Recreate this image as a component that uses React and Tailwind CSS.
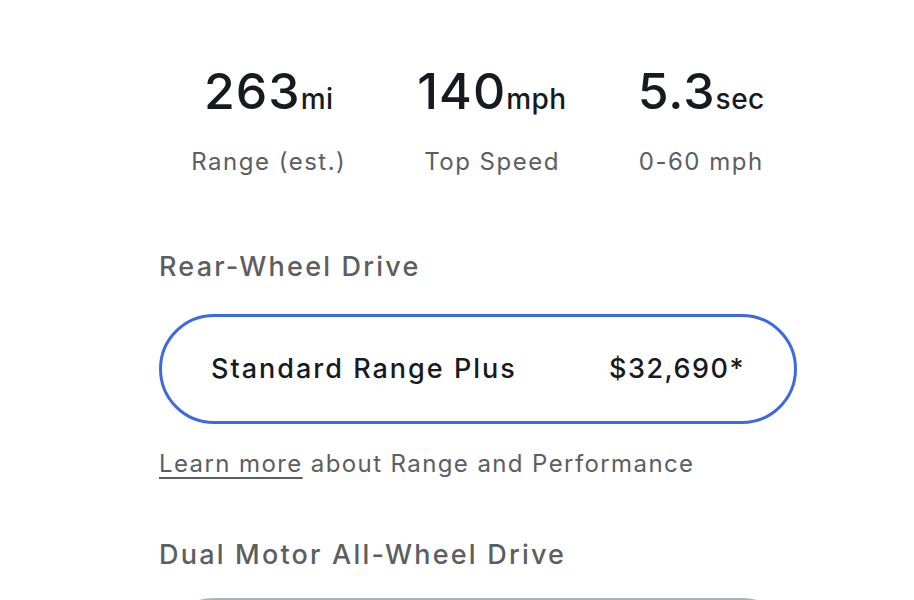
export default function App() {
  return (
    <div className="w-[914px] h-[600px] overflow-hidden bg-white font-['Inter',sans-serif]">
      <div className="ml-[159px] w-[638px] pt-[66px]">
        <div className="flex justify-center gap-[71px]">
          {[
            ["263", "mi", "Range (est.)"],
            ["140", "mph", "Top Speed"],
            ["5.3", "sec", "0-60 mph"],
          ].map(([v, u, l]) => (
            <div key={l} className="flex flex-col items-center">
              <div className="flex items-baseline text-[#171a20] h-[50px]">
                <span className="text-[50px] leading-[50px] font-medium tracking-[1px]">{v}</span>
                <span className="text-[28px] leading-[50px] font-medium tracking-[0.5px]">{u}</span>
              </div>
              <div className="mt-[31px] text-[24px] leading-[30px] tracking-[1.5px] text-[#5c5e62]">{l}</div>
            </div>
          ))}
        </div>
        <div className="mt-[74px] text-[27px] leading-[32px] font-medium tracking-[2.2px] text-[#5c5e62]">Rear-Wheel Drive</div>
        <div className="mt-[31px] h-[110px] rounded-full border-[3px] border-[#3e6ae1] flex items-center justify-between pl-[49px] pr-[49px] text-[27px] font-medium tracking-[2px] text-[#171a20]">
          <span>Standard Range Plus</span>
          <span className="tracking-[1.5px]">$32,690*</span>
        </div>
        <div className="mt-[25px] text-[24px] leading-[30px] tracking-[1.4px] text-[#5c5e62]">
          <span className="underline decoration-2 underline-offset-[5px]">Learn more</span> about Range and Performance
        </div>
        <div className="mt-[60px] text-[27px] leading-[32px] font-medium tracking-[2.2px] text-[#5c5e62]">Dual Motor All-Wheel Drive</div>
        <div className="mt-[27px] h-[110px] rounded-full border-[3px] border-[#b0b1b3]"></div>
      </div>
    </div>
  );
}
